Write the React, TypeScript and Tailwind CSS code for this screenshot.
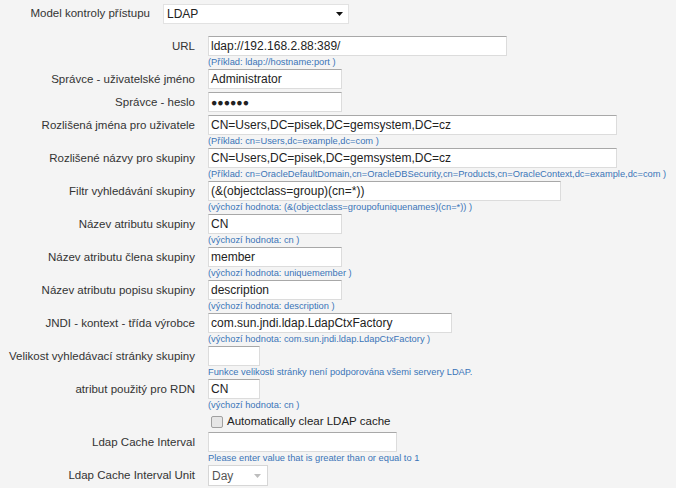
import type { ReactElement } from 'react';

// ============================================================================
// Types
// ============================================================================

interface FieldRow {
  label: string;
  value?: string;
  width: string;
  hint?: string;
  password?: boolean;
}

const rows: FieldRow[] = [
  { label: 'URL', value: 'ldap://192.168.2.88:389/', width: 'w-[299px]', hint: '(Příklad: ldap://hostname:port )' },
  { label: 'Správce - uživatelské jméno', value: 'Administrator', width: 'w-[134px]' },
  { label: 'Správce - heslo', value: '●●●●●●', width: 'w-[134px]', password: true },
  {
    label: 'Rozlišená jména pro uživatele',
    value: 'CN=Users,DC=pisek,DC=gemsystem,DC=cz',
    width: 'w-[409px]',
    hint: '(Příklad: cn=Users,dc=example,dc=com )',
  },
  {
    label: 'Rozlišené názvy pro skupiny',
    value: 'CN=Users,DC=pisek,DC=gemsystem,DC=cz',
    width: 'w-[409px]',
    hint: '(Příklad: cn=OracleDefaultDomain,cn=OracleDBSecurity,cn=Products,cn=OracleContext,dc=example,dc=com )',
  },
  {
    label: 'Filtr vyhledávání skupiny',
    value: '(&(objectclass=group)(cn=*))',
    width: 'w-[353px]',
    hint: '(výchozí hodnota: (&(objectclass=groupofuniquenames)(cn=*)) )',
  },
  { label: 'Název atributu skupiny', value: 'CN', width: 'w-[134px]', hint: '(výchozí hodnota: cn )' },
  { label: 'Název atributu člena skupiny', value: 'member', width: 'w-[134px]', hint: '(výchozí hodnota: uniquemember )' },
  { label: 'Název atributu popisu skupiny', value: 'description', width: 'w-[134px]', hint: '(výchozí hodnota: description )' },
  {
    label: 'JNDI - kontext - třída výrobce',
    value: 'com.sun.jndi.ldap.LdapCtxFactory',
    width: 'w-[244px]',
    hint: '(výchozí hodnota: com.sun.jndi.ldap.LdapCtxFactory )',
  },
  {
    label: 'Velikost vyhledávací stránky skupiny',
    value: '',
    width: 'w-[52px]',
    hint: 'Funkce velikosti stránky není podporována všemi servery LDAP.',
  },
  { label: 'atribut použitý pro RDN', value: 'CN', width: 'w-[52px]', hint: '(výchozí hodnota: cn )' },
];

// ============================================================================
// Pieces
// ============================================================================

function TextBox({ value, width, password }: { value: string; width: string; password?: boolean }): ReactElement {
  return (
    <div
      className={`${width} h-[20px] bg-white border border-[#dcdcdc] border-t-[#a8a8a8] pl-[2px] leading-[18px] text-[#222] whitespace-nowrap overflow-hidden ${
        password ? 'text-[10.5px]' : 'text-[12px]'
      }`}
    >
      {value}
    </div>
  );
}

function Hint({ children }: { children: string }): ReactElement {
  return <div className="h-[13px] text-[9.3px] leading-[13px] text-[#3b74b8] whitespace-nowrap">{children}</div>;
}

function Row({ label, children }: { label: string; children: ReactElement | ReactElement[] }): ReactElement {
  return (
    <div className="flex">
      <div className="w-[195px] shrink-0 text-right h-[20px] leading-[20px] text-[11.5px] text-[#333] whitespace-nowrap">
        {label}
      </div>
      <div className="ml-[13px] flex flex-col">{children}</div>
    </div>
  );
}

// ============================================================================
// Component
// ============================================================================

export default function App(): ReactElement {
  return (
    <div className="w-[676px] h-[488px] overflow-hidden bg-[#f4f4f4] pt-[4px] font-['Liberation_Sans',Arial,sans-serif]">
      {/* access model */}
      <div className="flex items-center h-[20px] mb-[12px]">
        <div className="w-[150px] text-right text-[11.5px] text-[#333] whitespace-nowrap">Model kontroly přístupu</div>
        <div className="ml-[13px] w-[186px] h-[20px] bg-white border border-[#e2e2e2] flex items-center justify-between pl-[3px] pr-[5px] text-[12px] text-[#222]">
          <span>LDAP</span>
          <svg width="7" height="4" viewBox="0 0 7 4">
            <path d="M0 0h7L3.5 4z" fill="#111" />
          </svg>
        </div>
      </div>

      {rows.map((r) => (
        <div key={r.label} className={r.hint ? '' : 'pb-[3px]'}>
          <Row label={r.label}>
            <TextBox value={r.value ?? ''} width={r.width} password={r.password} />
            {r.hint ? <Hint>{r.hint}</Hint> : <></>}
          </Row>
        </div>
      ))}

      {/* cache checkbox */}
      <div className="flex items-center h-[20px] pl-[211px]">
        <span className="w-[12px] h-[12px] border border-[#a0a0a0] bg-[#e6e6e6] rounded-[2px]" />
        <span className="ml-[4px] text-[11.5px] text-[#222]">Automatically clear LDAP cache</span>
      </div>

      <Row label="Ldap Cache Interval">
        <TextBox value="" width="w-[189px]" />
        <Hint>Please enter value that is greater than or equal to 1</Hint>
      </Row>

      <Row label="Ldap Cache Interval Unit">
        <div className="w-[60px] h-[21px] bg-white border border-[#d6d6d6] flex items-center justify-between pl-[3px] pr-[6px] text-[12px] text-[#555]">
          <span>Day</span>
          <svg width="7" height="4" viewBox="0 0 7 4">
            <path d="M0 0h7L3.5 4z" fill="#bdbdbd" />
          </svg>
        </div>
      </Row>
    </div>
  );
}
